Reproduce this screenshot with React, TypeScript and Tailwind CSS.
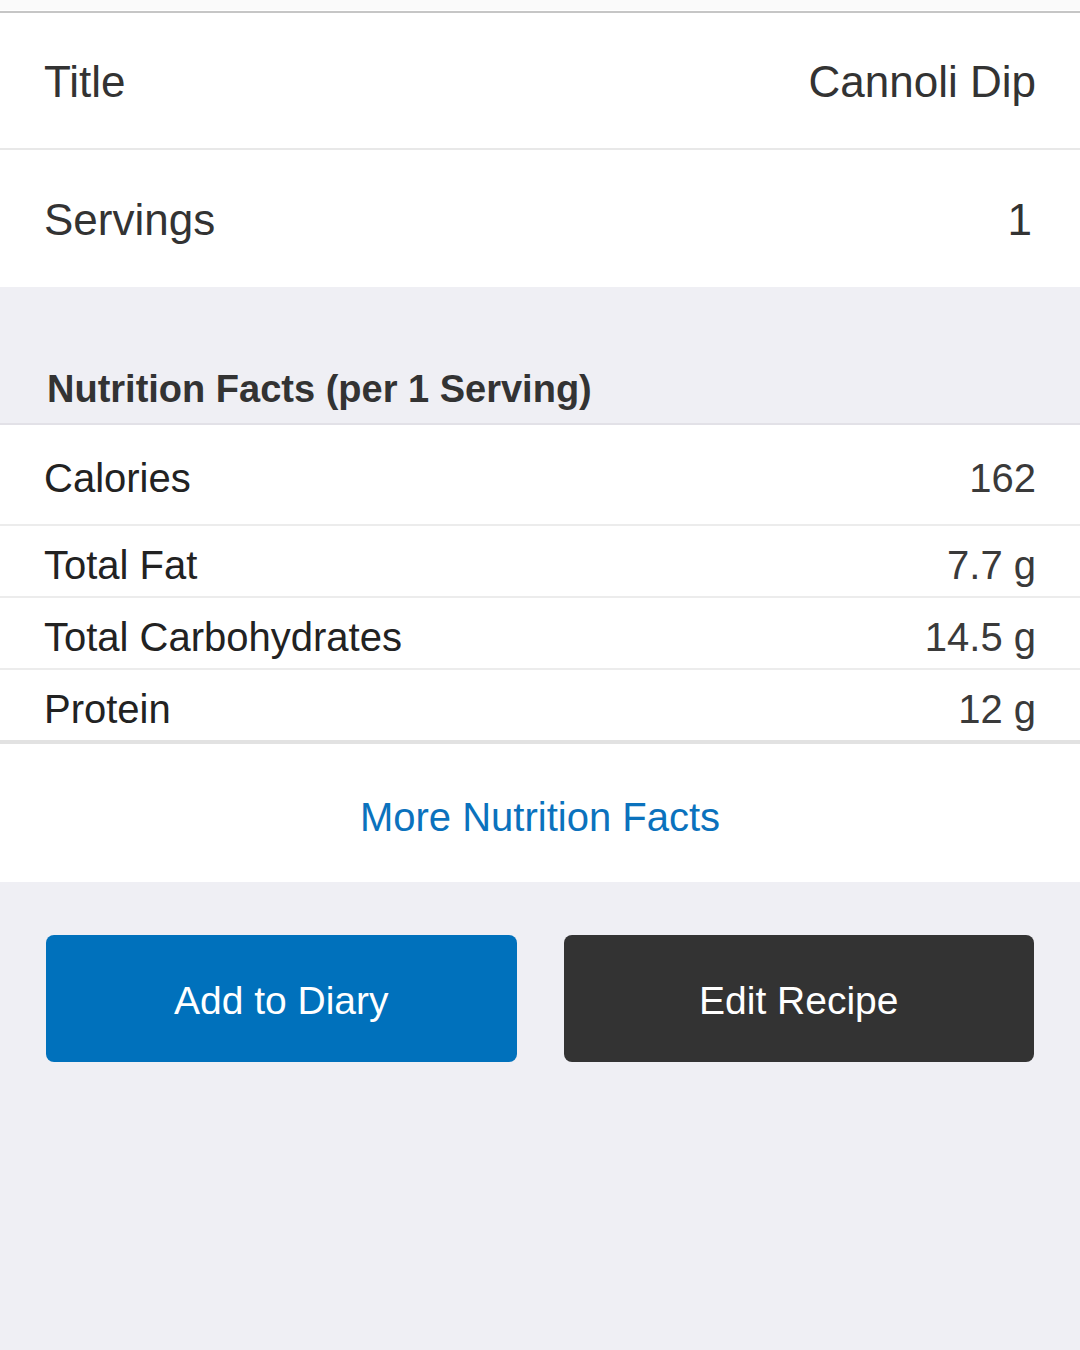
import React from "react";

const font = { fontFamily: '"Liberation Sans", Arial, sans-serif' };

function NutRow({ label, value, h, last }: { label: string; value: string; h: string; last?: boolean }) {
  return (
    <div className={`flex items-center justify-between px-[44px] pt-[7px] bg-white ${h} ${last ? "" : "border-b-2 border-[#ececec]"}`}>
      <span className="text-[40px] text-[#222] leading-none">{label}</span>
      <span className="text-[40px] text-[#3a3a3a] leading-none">{value}</span>
    </div>
  );
}

export default function App() {
  return (
    <div className="w-[1080px] h-[1350px] bg-[#efeff4] flex flex-col overflow-hidden" style={font}>
      <div className="h-[11px] bg-[#fafafa] border-b border-white" />
      <div className="h-[2px] bg-[#c6c6c6]" />
      <div className="h-[137px] bg-white flex items-center justify-between px-[44px] pt-[2px] border-b-2 border-[#e8e8e8]">
        <span className="text-[44px] text-[#333] leading-none">Title</span>
        <span className="text-[44px] text-[#333] leading-none">Cannoli Dip</span>
      </div>
      <div className="h-[137px] bg-white flex items-center justify-between px-[44px] pt-[2px]">
        <span className="text-[44px] text-[#333] leading-none">Servings</span>
        <span className="text-[44px] text-[#333] leading-none pr-[4px]">1</span>
      </div>
      <div className="h-[138px] flex items-end px-[47px] pb-[15px] border-b-2 border-[#e2e1e7]">
        <span className="text-[38px] font-bold text-[#333] leading-none">Nutrition Facts (per 1 Serving)</span>
      </div>
      <NutRow label="Calories" value="162" h="h-[101px]" />
      <NutRow label="Total Fat" value="7.7 g" h="h-[72px]" />
      <NutRow label="Total Carbohydrates" value="14.5 g" h="h-[72px]" />
      <NutRow label="Protein" value="12 g" h="h-[70px]" last />
      <div className="h-[4px] bg-[#e2e2e2]" />
      <div className="h-[138px] bg-white flex items-center justify-center pt-[8px]">
        <span className="text-[40px] text-[#0b72bd] leading-none">More Nutrition Facts</span>
      </div>
      <div className="flex gap-[47px] px-[46px] pt-[53px]">
        <button className="flex-1 h-[127px] rounded-[8px] bg-[#0071bc] text-white text-[39px] leading-none flex items-center justify-center pt-[4px]" style={font}>
          Add to Diary
        </button>
        <button className="flex-1 h-[127px] rounded-[8px] bg-[#333333] text-white text-[39px] leading-none flex items-center justify-center pt-[4px]" style={font}>
          Edit Recipe
        </button>
      </div>
    </div>
  );
}
